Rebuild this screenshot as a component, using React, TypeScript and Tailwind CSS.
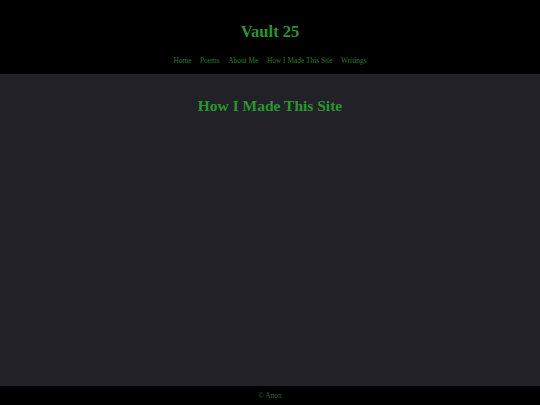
import React from "react";

export default function App() {
  const nav = ["Home", "Poems", "About Me", "How I Made This Site", "Writings"];
  return (
    <div className="flex flex-col h-[405px] w-full bg-[#222127]" style={{ fontFamily: "'Liberation Serif', serif" }}>
      <header className="bg-black h-[74px] flex flex-col items-center">
        <h1 className="mt-[22px] text-[16.5px] leading-[20px] font-bold text-[#2a962f]">Vault 25</h1>
        <nav className="mt-[14px] flex gap-[8.5px] text-[7.4px] leading-[10px] text-[#2a7a2e]">
          {nav.map((n) => (
            <span key={n}>{n}</span>
          ))}
        </nav>
      </header>
      <main className="flex-1 flex flex-col items-center">
        <h2 className="mt-[23px] text-[15.5px] leading-[18px] font-bold text-[#2a962f]">How I Made This Site</h2>
      </main>
      <footer className="bg-black h-[19px] flex items-center justify-center pt-[1px] text-[7.4px] text-[#2a6a2e]">© Anon</footer>
    </div>
  );
}
